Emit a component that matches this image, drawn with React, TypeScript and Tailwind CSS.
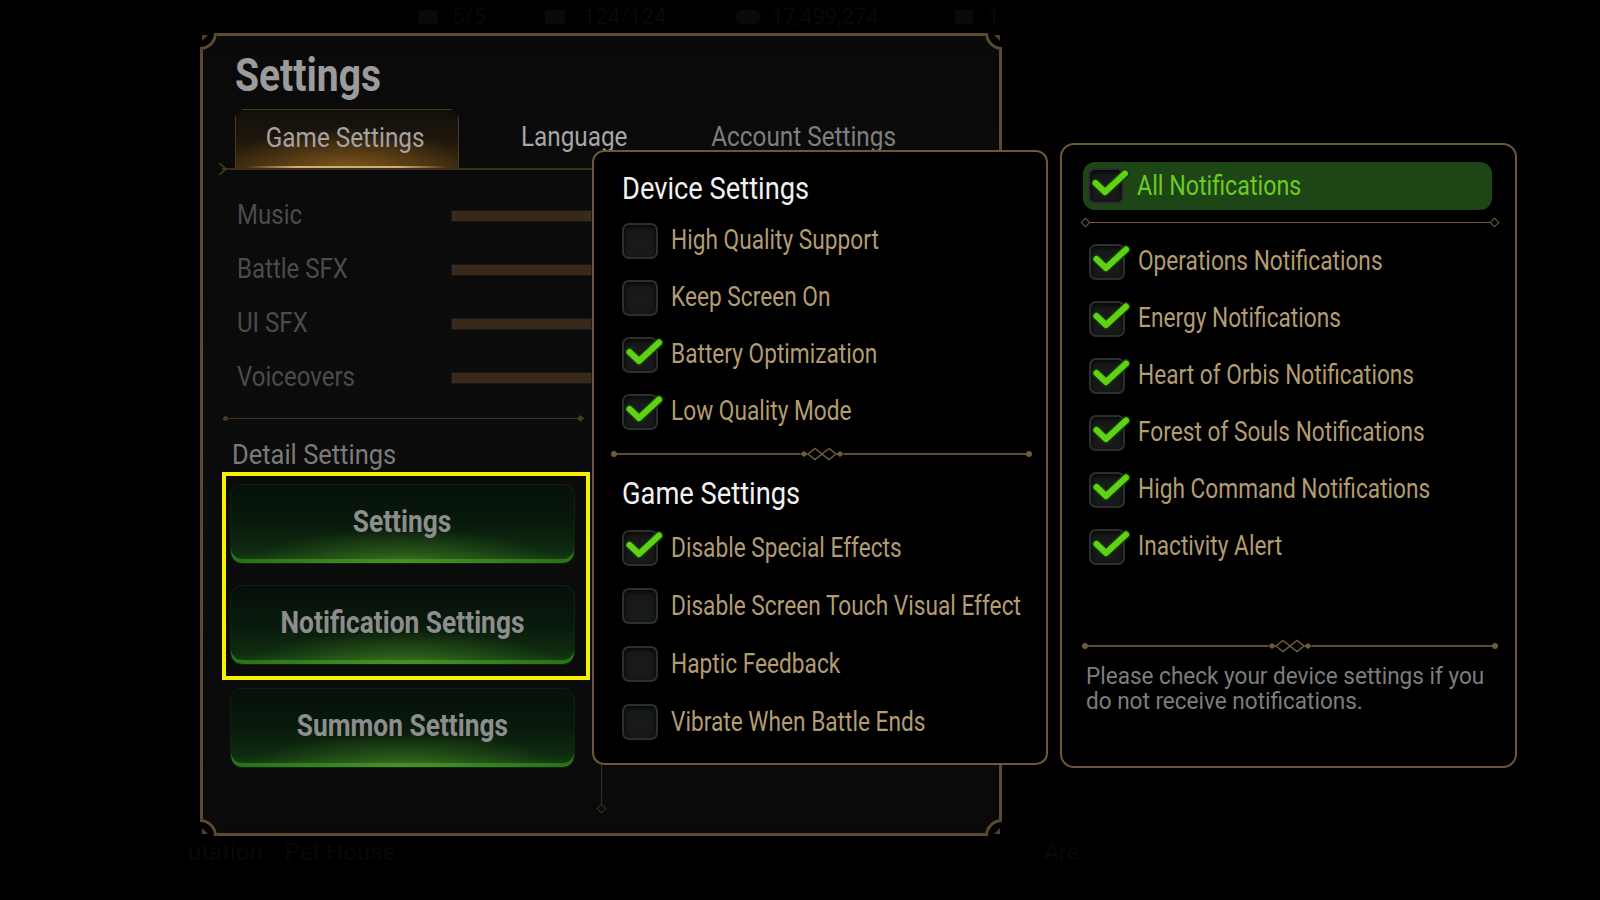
import React from "react";

const font = "font-[family-name:Roboto,sans-serif]";

const deviceOptions = [
  { label: "High Quality Support", checked: false },
  { label: "Keep Screen On", checked: false },
  { label: "Battery Optimization", checked: true },
  { label: "Low Quality Mode", checked: true },
];

const gameOptions = [
  { label: "Disable Special Effects", checked: true },
  { label: "Disable Screen Touch Visual Effect", checked: false },
  { label: "Haptic Feedback", checked: false },
  { label: "Vibrate When Battle Ends", checked: false },
];

const notifications = [
  "Operations Notifications",
  "Energy Notifications",
  "Heart of Orbis Notifications",
  "Forest of Souls Notifications",
  "High Command Notifications",
  "Inactivity Alert",
];

const volumes = ["Music", "Battle SFX", "UI SFX", "Voiceovers"];

// condensed look: Roboto squeezed horizontally
const Narrow = ({ children, className = "" }: { children: React.ReactNode; className?: string }) => (
  <span className={`inline-block whitespace-nowrap ${className}`}>{children}</span>
);

const CheckMark = () => (
  <svg className="absolute left-0 top-0 overflow-visible" width="44" height="32" viewBox="0 0 44 32">
    <path d="M7.5 15 L17 24 L37 5.5" fill="none" stroke="#163a08" strokeWidth="9" strokeLinecap="round" strokeLinejoin="round" />
    <path d="M7.5 15 L17 24 L37 5.5" fill="none" stroke="#5fd216" strokeWidth="6" strokeLinecap="round" strokeLinejoin="round" />
  </svg>
);

const CheckBox = ({ checked }: { checked?: boolean }) => (
  <div className="relative h-[36px] w-[36px] shrink-0">
    <div className="h-full w-full rounded-[7px] border-2 border-[#2b2f2e] bg-[#181a1a] shadow-[inset_0_2px_5px_rgba(0,0,0,0.85)]" />
    {checked && <CheckMark />}
  </div>
);

const Option = ({ label, checked, height }: { label: string; checked?: boolean; height: string }) => (
  <div className={`flex items-center gap-[13px] ${height}`}>
    <CheckBox checked={checked} />
    <Narrow className="origin-left scale-x-[0.84] text-[27px] leading-none text-[#b39c70]">{label}</Narrow>
  </div>
);

const Ornament = () => (
  <svg width="44" height="14" viewBox="0 0 44 14" className="shrink-0">
    <path d="M0 7 L4 4 L8 7 L4 10Z" fill="#6f5a3a" />
    <path d="M8 7 L15 1.5 L22 7 L15 12.5Z M22 7 L29 1.5 L36 7 L29 12.5Z" fill="none" stroke="#6f5a3a" strokeWidth="1.5" />
    <path d="M36 7 L40 4 L44 7 L40 10Z" fill="#6f5a3a" />
  </svg>
);

const Divider = () => (
  <div className="flex h-[14px] items-center">
    <div className="h-[6px] w-[6px] rounded-full bg-[#6f5a3a]" />
    <div className="h-[2px] flex-1 bg-[#5e4c31]" />
    <Ornament />
    <div className="h-[2px] flex-1 bg-[#5e4c31]" />
    <div className="h-[6px] w-[6px] rounded-full bg-[#6f5a3a]" />
  </div>
);

const Corner = ({ className }: { className: string }) => (
  <svg className={`absolute h-[20px] w-[20px] ${className}`} viewBox="0 0 20 20">
    <path d="M0 0 H17 A17 17 0 0 1 0 17 Z" fill="#000" />
    <path d="M15.5 0 A15.5 15.5 0 0 1 0 15.5" fill="none" stroke="#5b4a31" strokeWidth="3" />
    <path d="M2 2 L8 2 L2 8 Z" fill="#4d3f2a" />
  </svg>
);

function GreenButton({ label }: { label: string }) {
  return (
    <div className="relative flex h-[80px] w-[345px] shrink-0 items-center justify-center overflow-hidden rounded-[12px] border border-[#0e2411] bg-[linear-gradient(180deg,#06100a_0%,#08180b_45%,#0e2b10_85%,#164514_100%)] pb-[5px] shadow-[inset_0_-4px_0_#2a7418]">
      <div className="absolute inset-x-0 bottom-0 h-[34px] bg-[radial-gradient(ellipse_45%_100%_at_50%_100%,rgba(120,210,50,0.35),transparent)]" />
      <Narrow className="relative origin-center scale-x-[0.85] text-[31px] font-bold leading-none text-[#8d8d8d]">{label}</Narrow>
    </div>
  );
}

function SettingsFrame() {
  return (
    <div className="relative ml-[200px] h-[803px] w-[802px] border-[3px] border-[#5b4a31] bg-[linear-gradient(180deg,#0a0a0a_0%,#0c0c0c_60%,#0a0a0a_100%)]">
      <Corner className="left-[-3px] top-[-3px]" />
      <Corner className="right-[-3px] top-[-3px] rotate-90" />
      <Corner className="bottom-[-3px] right-[-3px] rotate-180" />
      <Corner className="bottom-[-3px] left-[-3px] -rotate-90" />

      <h1 className="pl-[32px] pt-[15px] text-[47px] font-bold leading-none text-[#9b9b9b]">
        <Narrow className="origin-left scale-x-[0.83]">Settings</Narrow>
      </h1>

      <div className="ml-[32px] mt-[11px] flex h-[59px]">
        <div className="relative flex w-[224px] items-center justify-center border-x border-t border-[#4b3a22] bg-[linear-gradient(180deg,#120e09_0%,#1c150c_45%,#3a280e_100%)] pb-[2px] pr-[4px] [clip-path:polygon(8px_0,calc(100%_-_8px)_0,100%_8px,100%_100%,0_100%,0_8px)]">
          <div className="absolute inset-x-0 bottom-0 h-[40px] bg-[radial-gradient(ellipse_55%_100%_at_50%_100%,rgba(210,140,40,0.45),transparent)]" />
          <div className="absolute inset-x-[10px] bottom-0 h-[2px] bg-[linear-gradient(90deg,transparent,#cfae7a_25%,#cfae7a_75%,transparent)]" />
          <Narrow className="relative origin-center scale-x-[0.9] text-[27px] leading-none text-[#a3a3a3]">Game Settings</Narrow>
        </div>
        <div className="ml-[15px] flex w-[200px] items-center justify-center pb-[2px]">
          <Narrow className="origin-center scale-x-[0.9] text-[27px] leading-none text-[#a6a6a6]">Language</Narrow>
        </div>
        <div className="ml-[30px] flex w-[200px] items-center justify-center pb-[2px]">
          <Narrow className="origin-center scale-x-[0.9] text-[27px] leading-none text-[#7e7e7e]">Account Settings</Narrow>
        </div>
      </div>

      <div className="relative ml-[19px] h-[2px] w-[770px] bg-[#3b2e1c]">
        <svg className="absolute left-[-3px] top-[-5px]" width="8" height="12" viewBox="0 0 8 12">
          <path d="M0 0 L7 6 L0 12" fill="none" stroke="#4b3a22" strokeWidth="1.5" />
        </svg>
      </div>

      <div className="flex h-[645px]">
        <div className="ml-[19px] flex w-[370px] flex-col">
          <div className="mt-[19px]">
            {volumes.map((v) => (
              <div key={v} className="flex h-[54px] items-center pl-[15px]">
                <div className="w-[214px]">
                  <Narrow className="origin-left scale-x-[0.89] text-[27px] leading-none text-[#4b4b4b]">{v}</Narrow>
                </div>
                <div className="h-[12px] flex-1 border border-[#171717] bg-[#38291a]" />
              </div>
            ))}
          </div>

          <div className="ml-[1px] mt-[10px] flex h-[6px] w-[360px] items-center">
            <div className="h-[5px] w-[5px] rounded-full bg-[#4a3a24]" />
            <div className="h-[1px] flex-1 bg-[#3e3120]" />
            <div className="h-[5px] w-[5px] rotate-45 bg-[#4a3a24]" />
          </div>

          <div className="mt-[20px] pl-[10px] text-[28px] leading-none text-[#7b7b7b]">
            <Narrow className="origin-left scale-x-[0.91]">Detail Settings</Narrow>
          </div>

          <div className="mt-[3px] flex h-[208px] w-[368px] flex-col gap-[21px] border-4 border-[#f7f200] pl-[4px] pt-[8px]">
            <GreenButton label="Settings" />
            <GreenButton label="Notification Settings" />
          </div>

          <div className="mt-[8px] pl-[8px]">
            <GreenButton label="Summon Settings" />
          </div>
        </div>

        <div className="ml-[5px] flex w-[9px] flex-col items-center">
          <div className="w-[1px] flex-1 bg-[#3a2e1d]" />
          <div className="mb-[3px] h-[7px] w-[7px] rotate-45 border border-[#3a2e1d]" />
        </div>
      </div>
    </div>
  );
}

function DevicePanel() {
  return (
    <div className="mt-[7px] h-[615px] w-[456px] rounded-[12px] border-2 border-[#6c5737] bg-black px-[28px] pt-[21px]">
      <h2 className="text-[31px] leading-none text-[#f1f1f1]">
        <Narrow className="origin-left scale-x-[0.88]">Device Settings</Narrow>
      </h2>
      <div className="mt-[8px]">
        {deviceOptions.map((o) => (
          <Option key={o.label} label={o.label} checked={o.checked} height="h-[57px]" />
        ))}
      </div>
      <div className="-ml-[11px] mt-[7px] w-[421px]">
        <Divider />
      </div>
      <h2 className="mt-[17px] text-[31px] leading-none text-[#f1f1f1]">
        <Narrow className="origin-left scale-x-[0.88]">Game Settings</Narrow>
      </h2>
      <div className="mt-[10px]">
        {gameOptions.map((o) => (
          <Option key={o.label} label={o.label} checked={o.checked} height="h-[58px]" />
        ))}
      </div>
    </div>
  );
}

function NotificationPanel() {
  return (
    <div className="h-[625px] w-[457px] rounded-[14px] border-2 border-[#6c5737] bg-black pl-[21px] pr-[23px] pt-[17px]">
      <div className="flex h-[48px] items-center gap-[13px] rounded-[12px] bg-[#1d4516] pl-[5px]">
        <CheckBox checked />
        <Narrow className="origin-left scale-x-[0.86] text-[27px] leading-none text-[#6dcb22]">All Notifications</Narrow>
      </div>

      <div className="-ml-[1px] mt-[8px] flex h-[8px] w-[416px] items-center">
        <div className="h-[7px] w-[7px] rotate-45 border border-[#6f5a3a]" />
        <div className="h-[1px] flex-1 bg-[#6f5a3a]" />
        <div className="h-[7px] w-[7px] rotate-45 border border-[#6f5a3a]" />
      </div>

      <div className="mt-[7px] pl-[6px]">
        {notifications.map((n) => (
          <Option key={n} label={n} checked height="h-[57px]" />
        ))}
      </div>

      <div className="-ml-[1px] mt-[64px] w-[416px]">
        <Divider />
      </div>

      <div className="mt-[11px] flex flex-col pl-[3px] text-[23px] leading-[25px] text-[#7d7d7d]">
        <Narrow className="origin-left scale-x-[0.98]">Please check your device settings if you</Narrow>
        <Narrow className="origin-left scale-x-[0.98]">do not receive notifications.</Narrow>
      </div>
    </div>
  );
}

export default function App() {
  return (
    <div className={`relative h-[900px] w-[1600px] overflow-hidden bg-black ${font}`}>
      <div className="flex h-[33px] items-start pl-[418px] pt-[6px] text-[22px] leading-none text-[#090909]">
        <div className="flex w-[127px] items-center gap-[14px]">
          <div className="h-[14px] w-[20px] rounded-[3px] bg-[#0c0808]" />
          <span>5/5</span>
        </div>
        <div className="flex w-[190px] items-center gap-[18px]">
          <div className="h-[14px] w-[20px] rounded-[3px] bg-[#0a0a0a]" />
          <span>124/124</span>
        </div>
        <div className="flex w-[220px] items-center gap-[10px]">
          <div className="h-[14px] w-[26px] rounded-full bg-[#0c0a08]" />
          <span>17,499,274</span>
        </div>
        <div className="flex items-center gap-[14px]">
          <div className="h-[14px] w-[18px] rounded-[3px] bg-[#0a0a0a]" />
          <span>1</span>
        </div>
      </div>

      <SettingsFrame />

      <div className="mt-[4px] flex pl-[188px] text-[24px] leading-none text-[#080808]">
        <span>utation</span>
        <span className="ml-[22px]">Pet House</span>
        <span className="ml-[648px]">Are</span>
      </div>

      <div className="absolute left-[592px] top-[143px] flex items-start gap-[12px]">
        <DevicePanel />
        <NotificationPanel />
      </div>
    </div>
  );
}
